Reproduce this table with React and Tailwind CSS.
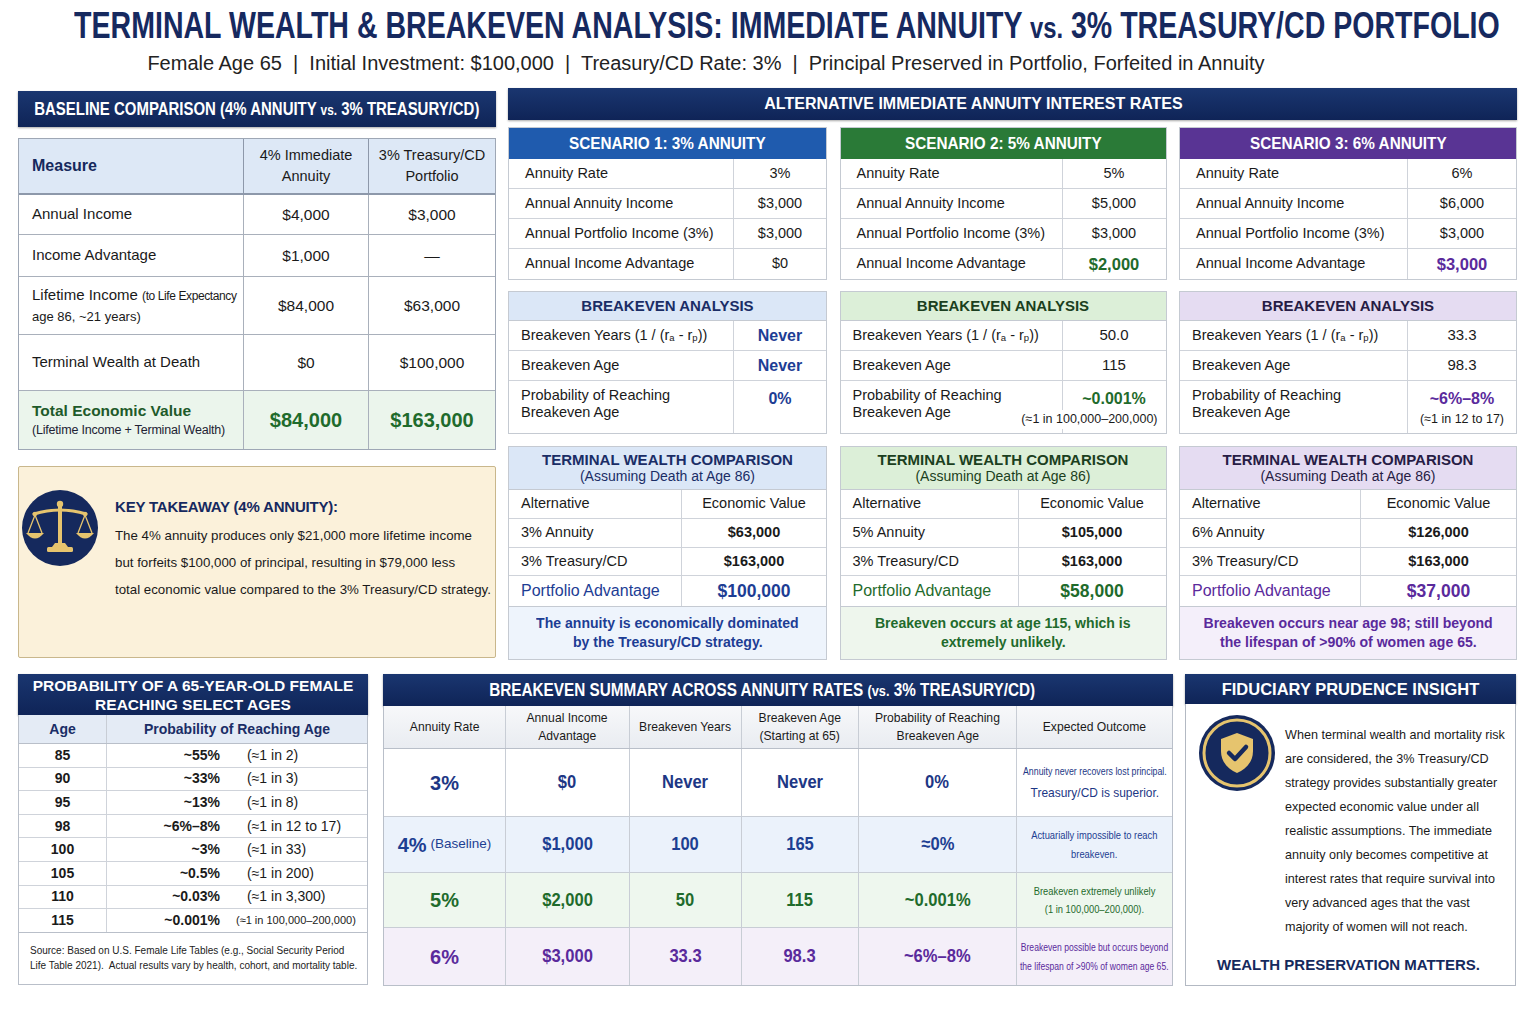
import React from 'react';

const SCENARIOS = [
  {
    title: 'SCENARIO 1: 3% ANNUITY',
    w: 'w-[319px]', valW: 'w-[93px]', tvW: 'w-[145px]',
    head: 'bg-[#1f5bae]', light: 'bg-[#dbe7f7]', lightText: 'text-[#1a2d66]',
    accent: 'text-[#1d3d94]', foot: 'bg-[#eef4fc]',
    rate: '3%', income: '$3,000', adv: '$0', advAccent: false,
    years: 'Never', age: 'Never', beAccent: true,
    prob: '0%', probNote: null,
    annuity: ['3% Annuity', '$63,000'], twAdv: '$100,000',
    footer: ['The annuity is economically dominated', 'by the Treasury/CD strategy.'],
  },
  {
    title: 'SCENARIO 2: 5% ANNUITY',
    w: 'w-[327px]', valW: 'w-[104px]', tvW: 'w-[148px]',
    head: 'bg-[#2a7a37]', light: 'bg-[#dcefd8]', lightText: 'text-[#1b3f20]',
    accent: 'text-[#1f6b2c]', foot: 'bg-[#eef6ed]',
    rate: '5%', income: '$5,000', adv: '$2,000', advAccent: true,
    years: '50.0', age: '115', beAccent: false,
    prob: '~0.001%', probNote: '(≈1 in 100,000–200,000)', noteCls: 'right-[8px] text-[12.5px] pl-[4px]',
    annuity: ['5% Annuity', '$105,000'], twAdv: '$58,000',
    footer: ['Breakeven occurs at age 115, which is', 'extremely unlikely.'],
  },
  {
    title: 'SCENARIO 3: 6% ANNUITY',
    w: 'w-[338px]', valW: 'w-[109px]', tvW: 'w-[156px]',
    head: 'bg-[#593494]', light: 'bg-[#e5dcf2]', lightText: 'text-[#271c45]',
    accent: 'text-[#5a2a9c]', foot: 'bg-[#f4effa]',
    rate: '6%', income: '$6,000', adv: '$3,000', advAccent: true,
    years: '33.3', age: '98.3', beAccent: false,
    prob: '~6%–8%', probNote: '(≈1 in 12 to 17)', noteCls: 'right-[12px] text-[12.5px]',
    annuity: ['6% Annuity', '$126,000'], twAdv: '$37,000',
    footer: ['Breakeven occurs near age 98; still beyond', 'the lifespan of >90% of women age 65.'],
  },
];

const PROB_ROWS = [
  ['85', '~55%', '(≈1 in 2)'],
  ['90', '~33%', '(≈1 in 3)'],
  ['95', '~13%', '(≈1 in 8)'],
  ['98', '~6%–8%', '(≈1 in 12 to 17)'],
  ['100', '~3%', '(≈1 in 33)'],
  ['105', '~0.5%', '(≈1 in 200)'],
  ['110', '~0.03%', '(≈1 in 3,300)'],
  ['115', '~0.001%', '(≈1 in 100,000–200,000)'],
];

// squeeze a line horizontally (the reference uses a condensed face we don't have)
function Sq({ className = '', children }) {
  return <span className={`inline-block whitespace-nowrap shrink-0 ${className}`}>{children}</span>;
}

const SUMMARY = [
  {
    rate: '3%', note: null, vals: ['$0', 'Never', 'Never', '0%'], h: 'h-[68px]',
    bg: 'bg-white', color: 'text-[#1d3785]',
    outcome: (
      <>
        <Sq className="text-[11px] scale-x-[0.8]">Annuity never recovers lost principal.</Sq>
        <Sq className="text-[13px] mt-[3px] scale-x-[0.92]">Treasury/CD is superior.</Sq>
      </>
    ),
  },
  {
    rate: '4%', note: '(Baseline)', vals: ['$1,000', '100', '165', '≈0%'], h: 'h-[56px]',
    bg: 'bg-[#ebf2fb]', color: 'text-[#1d3f92]',
    outcome: (
      <>
        <Sq className="text-[11px] scale-x-[0.85]">Actuarially impossible to reach</Sq>
        <Sq className="text-[11px] mt-[2px] scale-x-[0.85]">breakeven.</Sq>
      </>
    ),
  },
  {
    rate: '5%', note: null, vals: ['$2,000', '50', '115', '~0.001%'], h: 'h-[55px]',
    bg: 'bg-[#eef7ee]', color: 'text-[#1f6b2c]',
    outcome: (
      <>
        <Sq className="text-[11px] scale-x-[0.85]">Breakeven extremely unlikely</Sq>
        <Sq className="text-[11px] mt-[2px] scale-x-[0.85]">(1 in 100,000–200,000).</Sq>
      </>
    ),
  },
  {
    rate: '6%', note: null, vals: ['$3,000', '33.3', '98.3', '~6%–8%'], h: 'h-[57px]',
    bg: 'bg-[#f4eff9]', color: 'text-[#5a2a9c]',
    outcome: (
      <>
        <Sq className="text-[11px] scale-x-[0.78]">Breakeven possible but occurs beyond</Sq>
        <Sq className="text-[11px] mt-[2px] scale-x-[0.78]">the lifespan of &gt;90% of women age 65.</Sq>
      </>
    ),
  },
];

function Scales() {
  return (
    <svg width="78" height="78" viewBox="0 0 78 78">
      <circle cx="39" cy="39" r="38" fill="#15295d" />
      <g fill="#e6c46e" stroke="#e6c46e">
        <circle cx="39" cy="15" r="3.2" stroke="none" />
        <rect x="37" y="17" width="4" height="37" stroke="none" />
        <path d="M13 25 Q39 17 65 25" fill="none" strokeWidth="3.2" strokeLinecap="round" />
        <circle cx="14" cy="25" r="2.2" stroke="none" />
        <circle cx="64" cy="25" r="2.2" stroke="none" />
        <path d="M14 26 L7 44 M14 26 L21 44 M64 26 L57 44 M64 26 L71 44" strokeWidth="1.3" fill="none" />
        <path d="M5 44 H23 Q14 55 5 44 Z" stroke="none" />
        <path d="M55 44 H73 Q64 55 55 44 Z" stroke="none" />
        <path d="M34 54 H44 L47 58 H31 Z" stroke="none" />
        <rect x="26" y="58" width="26" height="5" rx="1.5" stroke="none" />
      </g>
    </svg>
  );
}

function Shield() {
  return (
    <svg width="78" height="78" viewBox="0 0 78 78">
      <circle cx="39" cy="39" r="38" fill="#15295d" />
      <circle cx="39" cy="39" r="33" fill="none" stroke="#e6c46e" strokeWidth="3" />
      <path d="M39 19 L55 25 V37 C55 48 48 55 39 59 C30 55 23 48 23 37 V25 Z" fill="#e6c46e" />
      <path d="M31 39 L37 45 L48 33" fill="none" stroke="#15295d" strokeWidth="4.5" strokeLinecap="round" strokeLinejoin="round" />
    </svg>
  );
}

function NavyBar({ className = '', inner = '', children }) {
  return (
    <div className={`bg-gradient-to-b from-[#1a3670] to-[#0f2457] text-white font-bold flex flex-col items-center justify-center shadow-[0_1px_2px_rgba(0,0,0,0.35)] ${className}`}>
      <span className={`inline-block whitespace-nowrap shrink-0 ${inner}`}>{children}</span>
    </div>
  );
}

function Row({ label, value, s, valueCls = '', last }) {
  return (
    <div className={`flex h-[30px] ${last ? '' : 'border-b border-[#cfd3da]'}`}>
      <div className="flex-1 flex items-center pl-[16px] text-[14.5px] text-[#1a1a1a]">{label}</div>
      <div className={`${s.valW} shrink-0 border-l border-[#cfd3da] flex items-center justify-center text-[14.5px] ${valueCls}`}>{value}</div>
    </div>
  );
}

function Scenario({ s }) {
  const beCls = s.beAccent ? `font-bold text-[16px] ${s.accent}` : 'text-[15px] text-[#1a1a1a]';
  return (
    <div className={`${s.w} flex flex-col`}>
      <div className="border border-[#c5cad2] bg-white">
        <div className={`${s.head} h-[31px] flex items-center justify-center text-white font-bold text-[17px]`}>
          <Sq className="scale-x-[0.9]">{s.title}</Sq>
        </div>
        <Row s={s} label="Annuity Rate" value={s.rate} />
        <Row s={s} label="Annual Annuity Income" value={s.income} />
        <Row s={s} label="Annual Portfolio Income (3%)" value="$3,000" />
        <Row s={s} label="Annual Income Advantage" value={s.adv} last valueCls={s.advAccent ? `font-bold text-[16.5px] ${s.accent}` : ''} />
      </div>

      <div className="mt-[11px] border border-[#c5cad2] bg-white">
        <div className={`${s.light} ${s.lightText} h-[29px] flex items-center justify-center font-bold text-[15px] border-b border-[#c5cad2]`}>BREAKEVEN ANALYSIS</div>
        <div className="flex h-[30px] border-b border-[#cfd3da]">
          <div className="flex-1 flex items-center pl-[12px] text-[14.5px] text-[#1a1a1a]">
            Breakeven Years (1 / (r<sub className="text-[9.5px]">a</sub>&nbsp;-&nbsp;r<sub className="text-[9.5px]">p</sub>))
          </div>
          <div className={`${s.valW} shrink-0 border-l border-[#cfd3da] flex items-center justify-center ${beCls}`}>{s.years}</div>
        </div>
        <div className="flex h-[30px] border-b border-[#cfd3da]">
          <div className="flex-1 flex items-center pl-[12px] text-[14.5px] text-[#1a1a1a]">Breakeven Age</div>
          <div className={`${s.valW} shrink-0 border-l border-[#cfd3da] flex items-center justify-center ${beCls}`}>{s.age}</div>
        </div>
        <div className="flex h-[52px] relative">
          <div className="flex-1 pl-[12px] pt-[6px] text-[14.5px] leading-[17px] text-[#1a1a1a]">Probability of Reaching<br />Breakeven Age</div>
          <div className={`${s.valW} shrink-0 border-l border-[#cfd3da] flex justify-center pt-[6px] font-bold text-[16px] ${s.accent}`}>{s.prob}</div>
          {s.probNote && (
            <div className={`absolute bottom-[4px] text-[#1a1a1a] bg-white ${s.noteCls}`}>{s.probNote}</div>
          )}
        </div>
      </div>

      <div className="mt-[12px] border border-[#c5cad2] bg-white">
        <div className={`${s.light} ${s.lightText} h-[43px] flex flex-col items-center justify-center border-b border-[#c5cad2] leading-[17px]`}>
          <div className="font-bold text-[15px]">TERMINAL WEALTH COMPARISON</div>
          <div className="text-[14px]">(Assuming Death at Age 86)</div>
        </div>
        {[
          ['Alternative', 'Economic Value', 'h-[29px]', ''],
          [s.annuity[0], s.annuity[1], 'h-[29px]', 'font-bold'],
          ['3% Treasury/CD', '$163,000', 'h-[28px]', 'font-bold'],
        ].map(([a, b, h, cb]) => (
          <div key={a} className={`flex ${h} border-b border-[#cfd3da] text-[14.5px] text-[#1a1a1a]`}>
            <div className="flex-1 flex items-center pl-[12px]">{a}</div>
            <div className={`${s.tvW} shrink-0 border-l border-[#cfd3da] flex items-center justify-center ${cb}`}>{b}</div>
          </div>
        ))}
        <div className={`flex h-[31px] border-b border-[#c5cad2] ${s.accent}`}>
          <div className="flex-1 flex items-center pl-[12px] text-[16px]">Portfolio Advantage</div>
          <div className={`${s.tvW} shrink-0 border-l border-[#cfd3da] flex items-center justify-center text-[17.5px] font-bold`}>{s.twAdv}</div>
        </div>
        <div className={`${s.foot} ${s.accent} h-[52px] flex flex-col items-center justify-center text-[14.5px] font-bold leading-[19px]`}>
          <Sq className="scale-x-[0.97]">{s.footer[0]}</Sq>
          <Sq className="scale-x-[0.97]">{s.footer[1]}</Sq>
        </div>
      </div>
    </div>
  );
}

function BaselineTable() {
  const rows = [
    { h: 'h-[40px]', label: 'Annual Income', a: '$4,000', b: '$3,000' },
    { h: 'h-[42px]', label: 'Income Advantage', a: '$1,000', b: '—' },
    {
      h: 'h-[58px]',
      label: (
        <div className="leading-[20px]">
          Lifetime Income <span className="text-[12px] tracking-[-0.4px]">(to Life Expectancy</span>
          <br />
          <span className="text-[13px]">age 86, ~21 years)</span>
        </div>
      ),
      a: '$84,000', b: '$63,000',
    },
    { h: 'h-[56px]', label: 'Terminal Wealth at Death', a: '$0', b: '$100,000' },
  ];
  return (
    <div className="mt-[11px] border border-[#9ea7b5] bg-white">
      <div className="flex h-[56px] bg-[#dde8f6] border-b-2 border-[#8d98aa]">
        <div className="w-[224px] shrink-0 flex items-center pl-[13px] font-bold text-[16px] text-[#16295c]">Measure</div>
        <div className="w-[125px] shrink-0 border-l border-[#8d98aa] flex items-center justify-center text-center text-[14.5px] leading-[21px] text-[#1a1a1a]">4% Immediate<br />Annuity</div>
        <div className="flex-1 border-l border-[#8d98aa] flex items-center justify-center text-center text-[14.5px] leading-[21px] text-[#1a1a1a]">3% Treasury/CD<br />Portfolio</div>
      </div>
      {rows.map((r, i) => (
        <div key={i} className={`flex ${r.h} border-b border-[#a9b0bb] text-[15px] text-[#1a1a1a]`}>
          <div className="w-[224px] shrink-0 flex items-center pl-[13px]">{r.label}</div>
          <div className="w-[125px] shrink-0 border-l border-[#a9b0bb] flex items-center justify-center text-[15.5px]">{r.a}</div>
          <div className="flex-1 border-l border-[#a9b0bb] flex items-center justify-center text-[15.5px]">{r.b}</div>
        </div>
      ))}
      <div className="flex h-[58px] bg-[#ebf5ec]">
        <div className="w-[224px] shrink-0 flex flex-col justify-center pl-[13px] text-[#1e5a2a]">
          <div className="font-bold text-[15.5px] leading-[20px]">Total Economic Value</div>
          <div className="text-[12.5px] leading-[18px] text-[#223] tracking-[-0.2px]">(Lifetime Income + Terminal Wealth)</div>
        </div>
        <div className="w-[125px] shrink-0 border-l border-[#a9b0bb] flex items-center justify-center text-[20px] font-bold text-[#1f6b2c]">$84,000</div>
        <div className="flex-1 border-l border-[#a9b0bb] flex items-center justify-center text-[20px] font-bold text-[#1f6b2c]">$163,000</div>
      </div>
    </div>
  );
}

function ProbabilityTable() {
  return (
    <div className="w-[350px] flex flex-col">
      <NavyBar className="h-[41px] text-[15.5px] leading-[19px]" inner="text-center">
        PROBABILITY OF A 65-YEAR-OLD FEMALE<br />REACHING SELECT AGES
      </NavyBar>
      <div className="border border-t-0 border-[#b9bfc9] bg-white">
        <div className="flex h-[29px] bg-[#e4ebf5] border-b border-[#b9bfc9] text-[14px] font-bold text-[#1a2d66]">
          <div className="w-[87px] shrink-0 flex items-center justify-center">Age</div>
          <div className="flex-1 border-l border-[#c8cdd5] flex items-center justify-center">Probability of Reaching Age</div>
        </div>
        {PROB_ROWS.map(([age, p, note], i) => (
          <div key={age} className={`flex h-[23.6px] border-b ${i < PROB_ROWS.length - 1 ? 'border-[#cfd3da]' : 'border-[#b9bfc9]'} text-[14px] text-[#1a1a1a]`}>
            <div className="w-[87px] shrink-0 flex items-center justify-center font-bold">{age}</div>
            <div className="flex-1 border-l border-[#cfd3da] flex items-center">
              <div className="w-[113px] shrink-0 text-right font-bold">{p}</div>
              <div className={i === 7 ? 'ml-[16px] text-[11px] whitespace-nowrap' : 'ml-[27px] text-[14px]'}>{note}</div>
            </div>
          </div>
        ))}
        <div className="h-[51px] flex flex-col justify-center pl-[11px] text-[10px] leading-[15px] text-[#222]">
          <div>Source: Based on U.S. Female Life Tables (e.g., Social Security Period</div>
          <div>Life Table 2021).&nbsp; Actual results vary by health, cohort, and mortality table.</div>
        </div>
      </div>
    </div>
  );
}

function SummaryTable() {
  const widths = ['w-[121px]', 'w-[124px]', 'w-[112px]', 'w-[117px]', 'w-[158px]'];
  const heads = [
    ['Annuity Rate'],
    ['Annual Income', 'Advantage'],
    ['Breakeven Years'],
    ['Breakeven Age', '(Starting at 65)'],
    ['Probability of Reaching', 'Breakeven Age'],
  ];
  return (
    <div className="w-[790px] flex flex-col">
      <NavyBar className="h-[32px] text-[18px] pr-[32px]" inner="scale-x-[0.85]">
        BREAKEVEN SUMMARY ACROSS ANNUITY RATES <span className="text-[15px]">(vs.</span> 3% TREASURY/CD)
      </NavyBar>
      <div className="border border-t-0 border-[#b9bfc9] bg-white">
        <div className="flex h-[43px] bg-gradient-to-b from-[#f7f8fa] to-[#e9ecf1] border-b border-[#b9bfc9] text-[13.5px] text-[#1a1a1a] leading-[18px]">
          {heads.map((h, i) => (
            <div key={i} className={`${widths[i]} shrink-0 ${i ? 'border-l border-[#c8cdd5]' : ''} flex flex-col items-center justify-center text-center`}>
              {h.map(t => <Sq key={t} className="scale-x-[0.9]">{t}</Sq>)}
            </div>
          ))}
          <div className="flex-1 border-l border-[#c8cdd5] flex items-center justify-center">
            <Sq className="scale-x-[0.9]">Expected Outcome</Sq>
          </div>
        </div>
        {SUMMARY.map((r, ri) => (
          <div key={r.rate} className={`flex ${r.h} ${r.bg} ${r.color} ${ri < 3 ? 'border-b border-[#c8cdd5]' : ''}`}>
            <div className={`${widths[0]} shrink-0 flex items-center justify-center`}>
              <span className="text-[20px] font-bold">{r.rate}</span>
              {r.note && <span className="text-[13.5px] ml-[4px]">{r.note}</span>}
            </div>
            {r.vals.map((v, i) => (
              <div key={i} className={`${widths[i + 1]} shrink-0 border-l border-[#c8cdd5] flex items-center justify-center text-[18px] font-bold`}>
                <Sq className="scale-x-[0.92]">{v}</Sq>
              </div>
            ))}
            <div className="flex-1 min-w-0 border-l border-[#c8cdd5] flex flex-col items-center justify-center">{r.outcome}</div>
          </div>
        ))}
      </div>
    </div>
  );
}

function Fiduciary() {
  return (
    <div className="w-[331px] flex flex-col">
      <NavyBar className="h-[30px] text-[16.5px]">FIDUCIARY PRUDENCE INSIGHT</NavyBar>
      <div className="h-[282px] border border-t-0 border-[#b3b9c3] bg-white flex flex-col">
        <div className="flex pl-[12px] pt-[10px]">
          <div className="shrink-0"><Shield /></div>
          <div className="ml-[9px] pt-[9px] text-[12.6px] leading-[24px] text-[#1a1a1a] whitespace-nowrap">
            When terminal wealth and mortality risk<br />
            are considered, the 3% Treasury/CD<br />
            strategy provides substantially greater<br />
            expected economic value under all<br />
            realistic assumptions. The immediate<br />
            annuity only becomes competitive at<br />
            interest rates that require survival into<br />
            very advanced ages that the vast<br />
            majority of women will not reach.
          </div>
        </div>
        <div className="mt-[15px] text-center text-[15px] font-bold text-[#15295d] pr-[4px]">WEALTH PRESERVATION MATTERS.</div>
      </div>
    </div>
  );
}

export default function App() {
  return (
    <div className="w-[1536px] h-[1024px] bg-white overflow-hidden font-['Liberation_Sans',Arial,sans-serif] text-[#1a1a1a]">
      {/* title */}
      <div className="pt-[5px] h-[88px]">
        <div className="flex justify-center pl-[38px]">
          <Sq className="text-[36px] leading-[42px] font-bold text-[#16295f] scale-x-[0.793]">
            TERMINAL WEALTH &amp; BREAKEVEN ANALYSIS: IMMEDIATE ANNUITY <span className="text-[30px]">vs.</span> 3% TREASURY/CD PORTFOLIO
          </Sq>
        </div>
        <div className="flex justify-center pr-[124px] mt-[2px]">
          <Sq className="text-[20px] leading-[24px] text-[#222]">
            Female Age 65&nbsp; |&nbsp; Initial Investment: $100,000&nbsp; |&nbsp; Treasury/CD Rate: 3%&nbsp; |&nbsp; Principal Preserved in Portfolio, Forfeited in Annuity
          </Sq>
        </div>
      </div>

      <div className="flex pl-[18px]">
        {/* left column */}
        <div className="w-[478px] flex flex-col">
          <NavyBar className="mt-[3px] h-[36px] text-[19px]" inner="scale-x-[0.787]">
            BASELINE COMPARISON (4% ANNUITY <span className="text-[15px]">vs.</span> 3% TREASURY/CD)
          </NavyBar>
          <BaselineTable />
          <div className="mt-[16px] h-[192px] bg-[#fbf1da] border border-[#c9b78c] rounded-[2px] flex pl-[2px] pt-[22px]">
            <div className="shrink-0"><Scales /></div>
            <div className="ml-[16px] pt-[7px]">
              <div className="text-[15px] font-bold text-[#16295f] tracking-[-0.2px]">KEY TAKEAWAY (4% ANNUITY):</div>
              <div className="mt-[3px] text-[13.3px] leading-[27px] text-[#1a1a1a] whitespace-nowrap">
                The 4% annuity produces only $21,000 more lifetime income<br />
                but forfeits $100,000 of principal, resulting in $79,000 less<br />
                total economic value compared to the 3% Treasury/CD strategy.
              </div>
            </div>
          </div>
        </div>

        {/* right area */}
        <div className="ml-[12px] w-[1009px] flex flex-col">
          <NavyBar className="h-[32px] text-[16px] pr-[78px]">ALTERNATIVE IMMEDIATE ANNUITY INTEREST RATES</NavyBar>
          <div className="mt-[7px] flex justify-between">
            {SCENARIOS.map(s => <Scenario key={s.title} s={s} />)}
          </div>
        </div>
      </div>

      {/* bottom row */}
      <div className="mt-[14px] flex pl-[18px]">
        <ProbabilityTable />
        <div className="ml-[15px]"><SummaryTable /></div>
        <div className="ml-[12px]"><Fiduciary /></div>
      </div>
    </div>
  );
}
